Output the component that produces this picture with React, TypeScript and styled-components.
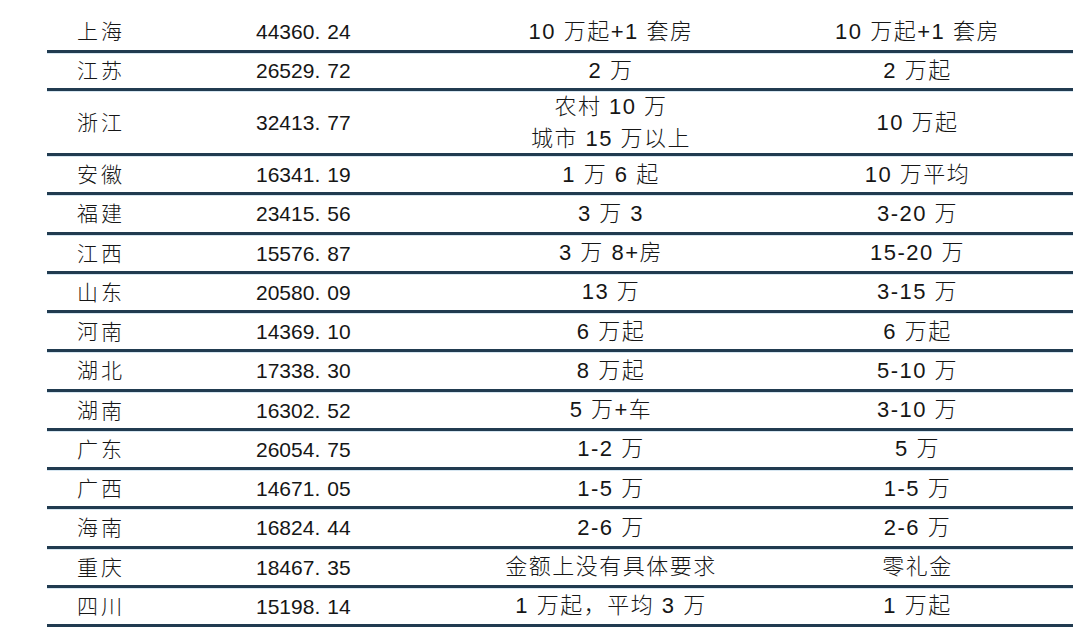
import React from 'react';
import styled, {createGlobalStyle} from "styled-components";

type Row = {
    province: string;
    income: string;
    rural: string[];
    city: string;
    tall?: boolean;
};

const rows: Row[] = [
    {province: '上海', income: '44360.24', rural: ['10 万起+1 套房'], city: '10 万起+1 套房'},
    {province: '江苏', income: '26529.72', rural: ['2 万'], city: '2 万起'},
    {province: '浙江', income: '32413.77', rural: ['农村 10 万', '城市 15 万以上'], city: '10 万起', tall: true},
    {province: '安徽', income: '16341.19', rural: ['1 万 6 起'], city: '10 万平均'},
    {province: '福建', income: '23415.56', rural: ['3 万 3'], city: '3-20 万'},
    {province: '江西', income: '15576.87', rural: ['3 万 8+房'], city: '15-20 万'},
    {province: '山东', income: '20580.09', rural: ['13 万'], city: '3-15 万'},
    {province: '河南', income: '14369.10', rural: ['6 万起'], city: '6 万起'},
    {province: '湖北', income: '17338.30', rural: ['8 万起'], city: '5-10 万'},
    {province: '湖南', income: '16302.52', rural: ['5 万+车'], city: '3-10 万'},
    {province: '广东', income: '26054.75', rural: ['1-2 万'], city: '5 万'},
    {province: '广西', income: '14671.05', rural: ['1-5 万'], city: '1-5 万'},
    {province: '海南', income: '16824.44', rural: ['2-6 万'], city: '2-6 万'},
    {province: '重庆', income: '18467.35', rural: ['金额上没有具体要求'], city: '零礼金'},
    {province: '四川', income: '15198.14', rural: ['1 万起，平均 3 万'], city: '1 万起'},
];

// row heights so that the rules land where they do in the scan
const rowHeight = (index: number, tall?: boolean) => {
    if (tall) return 65;
    if (index === 1) return 38.5;
    return 39.25;
};

const App = () => {
    return (
        <>
            <GlobalStyle/>
            <Page>
                <Table>
                    {rows.map((row, index) => {
                        const [whole, fraction] = row.income.split('.');
                        return (
                            <TableRow key={row.province} style={{height: `${rowHeight(index, row.tall)}px`}}>
                                <ProvinceCell>{row.province}</ProvinceCell>
                                <NumberCell>
                                    {whole}<Dot>.</Dot>{fraction}
                                </NumberCell>
                                <CenterCell>
                                    {row.rural.map((line) => (
                                        <Line key={line}>{line}</Line>
                                    ))}
                                </CenterCell>
                                <CenterCell>{row.city}</CenterCell>
                            </TableRow>
                        );
                    })}
                </Table>
            </Page>
        </>
    );
};

const GlobalStyle = createGlobalStyle`
  html, body {
    margin: 0;
    padding: 0;
    background: #ffffff;
  }
  body {
    font-family: "Liberation Sans", "Noto Sans CJK SC", sans-serif;
    color: #161616;
  }
`;

const Page = styled.div`
  width: 1077px;
  height: 627px;
  overflow: hidden;
  padding: 13.25px 0 0 47px;
  box-sizing: border-box;
  background: #ffffff;
`;

const Table = styled.div`
  width: 1026px;
  display: flex;
  flex-direction: column;
`;

const TableRow = styled.div`
  display: grid;
  grid-template-columns: 183px 230px 302px 311px;
  box-sizing: border-box;
  border-bottom: 3px solid #213b50;
  box-shadow: 0 1px 0 #d6e6f1;
`;

const Cell = styled.div`
  display: flex;
  align-items: center;
  font-size: 21px;
  line-height: 1;
  font-weight: 300;
  padding-top: 1px;
`;

const ProvinceCell = styled(Cell)`
  padding-left: 30px;
  letter-spacing: 3px;
`;

const NumberCell = styled(Cell)`
  padding-left: 26px;
`;

const Dot = styled.span`
  margin-right: 7px;
`;

const CenterCell = styled(Cell)`
  flex-direction: column;
  justify-content: center;
  font-size: 22px;
  letter-spacing: 1.5px;
  gap: 10px;
`;

const Line = styled.span`
  display: block;
  text-align: center;
`;

export default App;
